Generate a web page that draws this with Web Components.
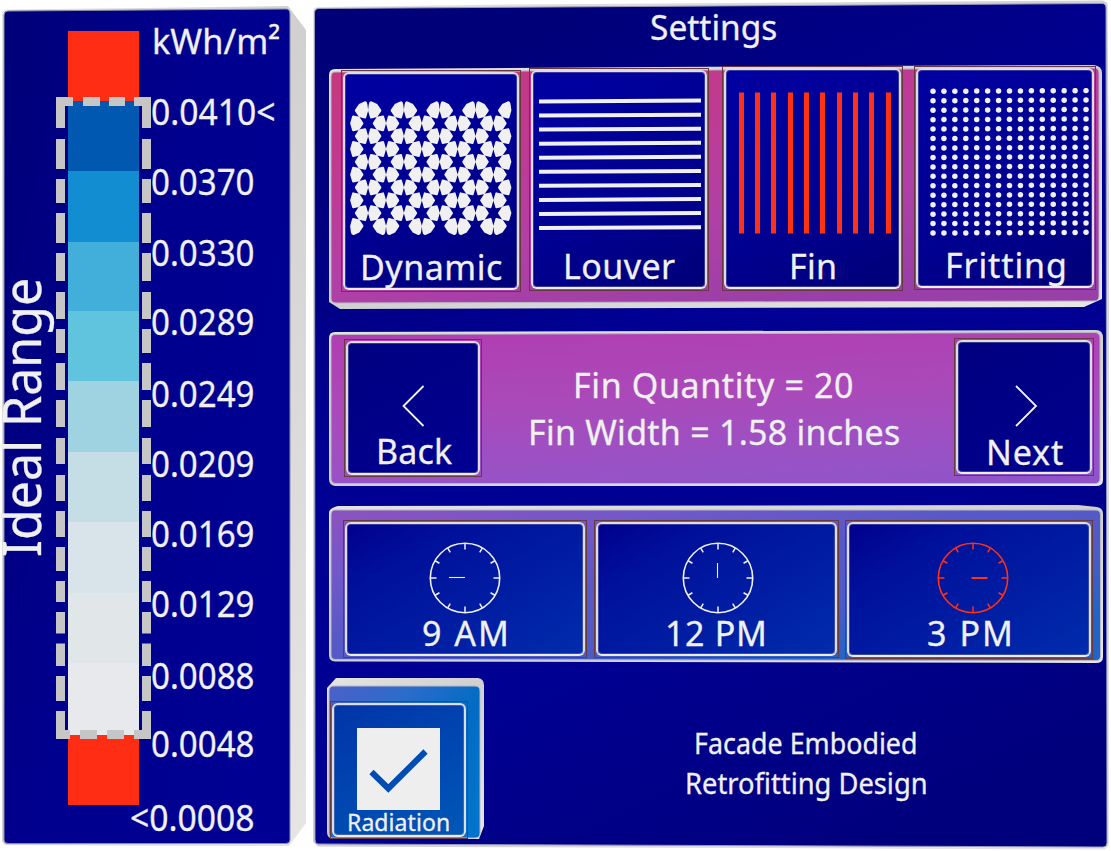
<!DOCTYPE html>
<html lang="en"><head><meta charset="utf-8"><title>Facade Settings</title>
<style>
body{margin:0;width:1111px;height:851px;overflow:hidden;background:#fff;font-family:"Noto Sans","Open Sans",sans-serif;color:#f0f0f0}
</style></head><body>
<facade-app></facade-app>
<script>
const canvas = document.createElement('canvas').getContext('2d');
const attr = (el, n, d = 0) => el.hasAttribute(n) ? +el.getAttribute(n) : d;

/* Text whose box is its cap height and whose ink spans the given width. */
class FitLabel extends HTMLElement {
  connectedCallback() {
    const size = attr(this, 'size', 34), w = attr(this, 'w'), text = this.textContent;
    canvas.font = size + 'px "Noto Sans"';
    const m = canvas.measureText(text);
    const left = m.actualBoundingBoxLeft, ink = m.actualBoundingBoxRight + m.actualBoundingBoxLeft;
    const spacing = ink < w ? (w - ink) / (text.length - 1) : 0;
    const scale = ink > w ? w / ink : 1;
    this.attachShadow({mode: 'open'}).innerHTML = `<style>
      :host{display:block;flex:none;width:${w}px;height:${size * .714}px;white-space:pre}
      span{display:inline-block;font-size:${size}px;line-height:${size * .714}px;letter-spacing:${spacing}px;vertical-align:top;
        -webkit-text-stroke:.3px currentColor;
        transform-origin:0 50%;transform:translateX(${left * scale}px) scaleX(${scale})}
    </style><span><slot></slot></span>`;
  }
}
customElements.define('fit-label', FitLabel);

/* Bevelled slab: a light back plate, an edge line and a gradient face. */
class BevelPanel extends HTMLElement {
  connectedCallback() {
    const c = (this.getAttribute('colors') || '').split(' ');
    const stops = c.map((v, i) => `<stop offset="${i / (c.length - 1)}" stop-color="${v}"/>`).join('');
    const [x1, y1, x2, y2] = (this.getAttribute('axis') || '0 0 1 1').split(' ');
    this.attachShadow({mode: 'open'}).innerHTML = `<style>
      :host{display:flex;position:relative;flex:none;box-sizing:border-box}
      svg{position:absolute;left:0;top:0;width:100%;height:100%;overflow:visible;z-index:0}
      .in{position:relative;z-index:1;display:flex;flex:1;flex-direction:inherit}
    </style><svg><defs><linearGradient id="f" gradientUnits="objectBoundingBox" x1="${x1}" y1="${y1}" x2="${x2}" y2="${y2}">${stops}</linearGradient>
    <linearGradient id="b" x1="0" y1="0" x2="1" y2="1"><stop stop-color="#e4e4e4"/><stop offset=".5" stop-color="#d0d0d0"/><stop offset="1" stop-color="#e6e6e6"/></linearGradient></defs>
    <path d="${this.getAttribute('back')}" fill="url(#b)"/>
    <path d="${this.getAttribute('face')}" fill="url(#f)" stroke="${this.getAttribute('edge') || '#b9b9c4'}" stroke-width="1" stroke-linejoin="round"/></svg>
    <div class="in"><slot></slot></div>`;
  }
}
customElements.define('bevel-panel', BevelPanel);

class UiCard extends HTMLElement {
  connectedCallback() {
    const c = this.getAttribute('fill') || '#0000a2,#000090 60%,#000078';
    this.attachShadow({mode: 'open'}).innerHTML = `<style>
      :host{display:block;flex:none;box-sizing:border-box;width:${attr(this, 'w')}px;height:${attr(this, 'h')}px;
        border:1.5px solid #683840;padding:1px}
      .ring{box-sizing:border-box;width:100%;height:100%;border:2.5px solid #dedede;border-bottom-color:#ececec;border-radius:6px;
        background:linear-gradient(${this.getAttribute('angle') || '150deg'},${c});box-shadow:inset 0 0 0 1px #8c8cba66}
      .box{display:flex;flex-direction:column;align-items:flex-start;margin:-4px -3px}
    </style><div class="ring"><div class="box"><slot></slot></div></div>`;
  }
}
customElements.define('ui-card', UiCard);

const art = {
  dynamic() {
    let d = '';
    const px = 17.9, py = 12.83;
    for (let j = 0; j < 10; j++) for (let i = -1; i <= 8; i++) {
      if ((i + j) % 2) continue;
      for (const s of [-1, 1]) {
        const cx = 18.1 + px * i + s * 6, cy = 12.5 + py * j;
        if (cx < 1 || cx > 159) continue;
        const dirs = [[s * 12, 0], [-s * 6, py], [-s * 6, -py]];
        const free = [(s < 0 && cx < 10) || (s > 0 && cx > 150), j === 9, j === 0];
        const outer = [free[0] ? .62 : .63, free[1] ? .8 : .63, free[2] ? .8 : .63];
        const toward = dirs.map(([x, y], k) => [cx + x * outer[k], cy + y * outer[k]]);
        const touch = dirs.map(([x, y]) => [cx - x * .51, cy - y * .51]);
        const order = [toward[0], touch[2], toward[1], touch[0], toward[2], touch[1]];
        const bend = [free[0], 0, free[1], 0, free[2], 0];
        const mix = (a, b, t) => (a[0] + (b[0] - a[0]) * t).toFixed(1) + ' ' + (a[1] + (b[1] - a[1]) * t).toFixed(1);
        order.forEach((p, k) => {
          const prev = order[(k + 5) % 6], next = order[(k + 1) % 6], t = bend[k] ? .4 : .14;
          if (k % 2) d += `L${mix(p, p, 0)}`;
          else d += `${k ? 'L' : 'M'}${mix(p, prev, t)}Q${mix(p, p, 0)} ${mix(p, next, t)}`;
        });
        d += 'Z';
      }
    }
    return [162, 144, `<path fill="#f0f0f0" d="${d}"/>`];
  },
  louver() {
    let s = '';
    for (let i = 0; i < 10; i++) { const y = 3 + i * 14.06; s += `<path d="M0 ${y + .5}L162 ${y - .4}v4L0 ${y + 4.5}z" fill="#f0f0f0"/>`; }
    return [162, 136, s];
  },
  fin() {
    return [152, 143, [0, 16, 32, 49, 65, 81, 98, 114, 130, 147].map(x => `<rect x="${x}" y=".5" width="5" height="141" fill="#ff3214"/>`).join('')];
  },
  fritting() {
    let s = '';
    for (let r = 0; r < 16; r++) for (let c = 0; c < 15; c++) s += `<circle cx="${3 + c * 10.93}" cy="${3.3 + r * 9.45 - c * .05}" r="2.75"/>`;
    return [160, 148, `<g fill="#f0f0f0">${s}</g>`];
  },
  back() { return [24, 44, '<path d="M22.5 2L2.5 22l20 20" fill="none" stroke="#f4f4f4" stroke-width="1.8"/>']; },
  next() { return [24, 44, '<path d="M2 2l20 20L2 42" fill="none" stroke="#f4f4f4" stroke-width="1.8"/>']; },
  clock(el) {
    const col = el.getAttribute('color') || '#f0f0f0', hand = el.getAttribute('hand');
    let s = `<circle cx="36" cy="36" r="34.7" stroke-width="1.6"/>`;
    for (let i = 0; i < 12; i++) s += `<path d="M36 1.5v${i % 3 ? 5 : 6}" transform="rotate(${i * 30} 36 36)" stroke-width="1.5"/>`;
    const d = {left: 'M20 35.5h16', up: 'M35.5 21v15', right: 'M34.5 36h16'}[hand];
    return [72, 72, `<g fill="none" stroke="${col}">${s}<path d="${d}" stroke-width="${hand === 'right' ? 2 : 1.1}"/></g>`];
  },
  check() { return [83, 82, '<path d="M0 0h83v82H0z" fill="#eeeeee"/><path d="M14.500 44L31.300 60.500L68.500 23.500" fill="none" stroke="#004cb4" stroke-width="6"/>']; }
};
class UiArt extends HTMLElement {
  connectedCallback() {
    const [w, h, body] = art[this.getAttribute('kind')](this);
    this.attachShadow({mode: 'open'}).innerHTML = `<style>:host{display:block;flex:none}svg{display:block}</style><svg width="${w}" height="${h}" viewBox="0 0 ${w} ${h}">${body}</svg>`;
  }
}
customElements.define('ui-art', UiArt);

/* Colour scale with the dashed frame laid over the ideal range. */
class RangeScale extends HTMLElement {
  connectedCallback() {
    const seg = [[70,'#ff2d14'],[70,'#0058b0'],[71,'#128dd2'],[69,'#42aeda'],[70,'#60c4de'],[71,'#a0d3e2'],[70,'#c5dde5'],[71,'#d8e3ea'],[70,'#e1e6e9'],[72,'#e8e9ec'],[70,'#ff2d14']];
    const runs = [[97,128],[139,169],[179,203],[213,243],[253,281],[292,319],[329,353],[363,390],[400,427],[438,464],[475,501],[511,537],[547,571],[581,602],[612,633.5],[643.5,666],[676,701],[711,739]];
    const rect = (x, y, w, h) => `<rect x="${x}" y="${y - 31}" width="${w}" height="${h}"/>`;
    const dash = runs.map(([a, b]) => rect(0, a, 9, b - a) + rect(86, a, 9, b - a)).join('')
      + [[0,17],[27,17],[53,16],[78,17]].map(([x, w]) => rect(x, 97, w, 9)).join('')
      + [[0,14],[24,17],[51,17],[78,17]].map(([x, w]) => rect(x, 730, w, 9)).join('');
    this.attachShadow({mode: 'open'}).innerHTML = `<style>
      :host{display:block;position:relative;width:95px;flex:none}
      .bar{margin:0 12px}.bar div{width:71px}
      svg{position:absolute;left:0;top:0}
    </style><div class="bar">${seg.map(([h, c]) => `<div style="height:${h}px;background:${c}"></div>`).join('')}</div>
    <svg width="95" height="774" fill="#c6c6c6">${dash}</svg>`;
  }
}
customElements.define('range-scale', RangeScale);

class LegendPanel extends HTMLElement {
  connectedCallback() {
    const rows = [['0.0410<',99,122],['0.0370',169,101],['0.0330',240,101],['0.0289',309,101],['0.0249',381,101],['0.0209',451,101],['0.0169',521,101],['0.0129',591,101],['0.0088',663,101],['0.0048',731,101],['<0.0008',805,122]];
    let bottom = 28 + 25;
    const labels = rows.map(([t, y, w]) => {
      const gap = y - bottom; bottom = y + 25.7;
      return `<fit-label size="36" w="${w}" style="margin-top:${gap}px;${t[0] === '<' ? 'margin-left:-21px' : ''}">${t.replace('<', '&lt;')}</fit-label>`;
    }).join('');
    this.attachShadow({mode: 'open'}).innerHTML = `<style>
      :host{display:block;width:313px;height:851px;flex:none}
      bevel-panel{width:313px;height:851px}
      .title{width:41px;flex:none;display:flex;flex-direction:column;padding-top:280px}
      .title fit-label{transform-origin:0 0;transform:translate(2px,275px) rotate(-90deg);align-self:flex-start}
      range-scale{margin:31px 0 0 15px}
      .values{padding-top:28px;margin-left:.5px}
    </style>
    <bevel-panel colors="#000078 #00008e #000092" axis="0 0 1 .6" edge="#8c8ca8"
      back="M2 12 L6 9.5 L145 8 L288 6 L306 30 V823 L289 846 L5 845 L2 841 V180 Z"
      face="M8 11 L286 9 Q290 9 290 14 V840 Q290 843.500 286 843.500 H8 Q4 843.500 4 840 V15 Q4 11 8 11 Z">
      <div class="title"><fit-label size="52" w="275">Ideal Range</fit-label></div>
      <range-scale></range-scale>
      <div class="values"><fit-label size="35" w="125" style="margin-left:2px">kWh/m²</fit-label>${labels}</div>
    </bevel-panel>`;
  }
}
customElements.define('legend-panel', LegendPanel);

class SettingsPanel extends HTMLElement {
  connectedCallback() {
    const L = (t, w, top, left, size = 34) => `<fit-label size="${size}" w="${w}" style="margin:${top}px 0 0 ${left}px">${t}</fit-label>`;
    const A = (k, top, left, extra = '') => `<ui-art kind="${k}" ${extra} style="margin:${top}px 0 0 ${left}px"></ui-art>`;
    const blue = '#00008e,#00109a 25%,#002cac';
    this.attachShadow({mode: 'open'}).innerHTML = `<style>
      :host{display:block;width:798px;height:851px;flex:none}
      .page{flex-direction:column;width:798px;height:851px}
      .col{display:flex;flex-direction:column;width:100%}
      .group{width:775px;margin-left:15px}
      .mid{flex-direction:column;display:flex}
      .foot{display:flex;margin:15px 0 0 14px}
    </style>
    <bevel-panel class="page" colors="#000078 #000092 #000092 #00007c" axis=".3 0 .75 1" edge="#9a9ab8"
      back="M0 12 Q0 7 5 7 L200 4.500 L790 .5 L794.500 3 L796 200 V845 L792 849.500 L300 847.500 L5 846.500 L0 842 Z"
      face="M6 8.500 L789 3.500 Q793 3.500 793 8 L794 843 Q794 847 790 847 L5 844 Q2 844 2 840 L1.500 13 Q1.500 8.500 6 8.500 Z">
     <div class="col">
      ${L('Settings', 125, 14.7, 337.5)}
      <bevel-panel class="group" style="height:244px;margin-top:26px"
        colors="#c4387c #bf3a92 #b140a6 #983fa8" axis="0 0 .62 1"
        back="M1 10 Q1 4 7 4 L330 2 L766 0 Q774 1 774 8 V234 L756 242 L350 243 L12 244 L1 237 Z"
        face="M7 7 L766 3 Q771 3 771 8 V231 Q771 236 766 236 L8 238 Q3 238 3 233 V12 Q3 7 7 7 Z">
        <ui-card w="180" h="222" style="margin:5px 0 0 13px">${A('dynamic', 28, 8)}${L('Dynamic', 139, 13, 21)}</ui-card>
        <ui-card w="180" h="223" style="margin:3px 0 0 8px">${A('louver', 28, 8.5)}${L('Louver', 109, 22.500, 36)}</ui-card>
        <ui-card w="181" h="225" style="margin:1px 0 0 13px">${A('fin', 26, 16)}${L('Fin', 43, 19, 69)}</ui-card>
        <ui-card w="182" h="224" style="margin:1px 0 0 11px">${A('fritting', 22, 14.5)}${L('Fritting', 117, 17, 33)}</ui-card>
      </bevel-panel>
      <bevel-panel class="group" style="height:157px;margin-top:21px"
        colors="#b03eb2 #aa4aba #9454c8 #8050c4" axis=".1 0 .45 1.5"
        back="M1 8 Q1 2 7 2 L768 0 Q775 0 775 8 V150 Q775 156 768 156 L7 156 Q1 155 1 149 Z"
        face="M7 4.500 L767 2.500 Q772 3 772 8 V148 Q772 153.500 767 153.500 H8 Q3 153.500 3 148 V9 Q3 4.500 7 4.500 Z">
        <ui-card w="138" h="138" fill="#000080,#000092" style="margin:9.500px 0 0 16px">${A('back', 45, 56)}${L('Back', 73, 11, 34)}</ui-card>
        <div class="mid" style="width:472px">${L('Fin Quantity = 20', 276, 43, 94)}${L('Fin Width = 1.58 inches', 368, 23, 49)}</div>
        <ui-card w="140" h="138" fill="#000080,#00008e" style="margin:8px 0 0 0">${A('next', 46, 59)}${L('Next', 74, 12, 34)}</ui-card>
      </bevel-panel>
      <bevel-panel class="group" style="height:158px;margin-top:18px"
        colors="#8c52c0 #7258c8 #5859c6 #4c5cc6 #2064c8" axis="0 0 .85 .85"
        back="M1 8 Q1 3 10 1 L750 0 L769 2 Q775 3 775 9 V152 Q775 158 768 158 L7 156.500 Q1 156 1 150 Z"
        face="M7 5 H767 Q772.500 5 772.500 10 V151 Q772.500 155.500 768 155.500 L8 154.500 Q3 154.500 3 150 V10 Q3 5 7 5 Z">
        <ui-card w="244" h="138" fill="${blue}" style="margin:15px 0 0 15px">${A('clock', 22, 85, 'hand="left"')}${L('9 AM', 83, 7, 79)}</ui-card>
        <ui-card w="245" h="138" fill="${blue}" style="margin:15px 0 0 7px">${A('clock', 22, 87, 'hand="up"')}${L('12 PM', 96, 7, 73)}</ui-card>
        <ui-card w="248" h="139" fill="${blue}" style="margin:15px 0 0 6px">${A('clock', 22.5, 90.5, 'hand="right" color="#ff3214"')}${L('3 PM', 82, 7, 82)}</ui-card>
      </bevel-panel>
      <div class="foot">
        <bevel-panel style="width:157px;height:161px" colors="#4c60c8 #2c6cca #006cc4 #0074cc" axis="0 0 1 .8"
          back="M0 10 L9 0 H151 Q157 1 157 7 V148 L152 161 H6 Q0 160 0 154 Z"
          face="M7 8 H148 Q153 8 153 13 V155 Q153 160 148 160 H6 Q2 160 2 155 V13 Q2 8 7 8 Z">
          <ui-card w="138" h="138" fill="#0034a8,#0058b8" style="margin:23px 0 0 3px">${A('check', 27, 25.5)}${L('Radiation', 100, 4.3, 18, 23)}</ui-card>
        </bevel-panel>
        <div class="mid">${L('Facade Embodied', 220, 55, 212, 28.5)}${L('Retrofitting Design', 239, 19.8, 203, 28.5)}</div>
      </div>
     </div>
    </bevel-panel>`;
  }
}
customElements.define('settings-panel', SettingsPanel);

class FacadeApp extends HTMLElement {
  connectedCallback() {
    this.attachShadow({mode: 'open'}).innerHTML = `<style>:host{display:flex;width:1111px;height:851px}</style><legend-panel></legend-panel><settings-panel></settings-panel>`;
  }
}
customElements.define('facade-app', FacadeApp);
</script></body></html>
